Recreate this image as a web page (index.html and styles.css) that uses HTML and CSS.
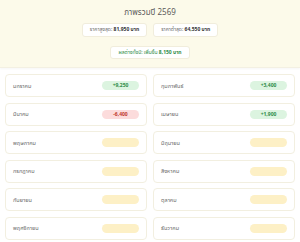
FILE: index.html
```html
<!DOCTYPE html>
<html lang="th">
<head>
<meta charset="utf-8">
<link rel="stylesheet" href="styles.css">
</head>
<body>
<header class="summary">
  <h1 class="title">ภาพรวมปี 2569</h1>
  <div class="stats">
    <div class="stat">ราคาสูงสุด: <b>81,950 บาท</b></div>
    <div class="stat">ราคาต่ำสุด: <b>64,550 บาท</b></div>
  </div>
  <div class="diff">ผลต่างทั้งปี: เพิ่มขึ้น <b>8,150 บาท</b></div>
</header>
<main class="months">
  <div class="card"><span class="name">มกราคม</span><span class="badge up">+9,250</span></div>
  <div class="card"><span class="name">กุมภาพันธ์</span><span class="badge up">+3,400</span></div>
  <div class="card"><span class="name">มีนาคม</span><span class="badge down">-6,400</span></div>
  <div class="card"><span class="name">เมษายน</span><span class="badge up">+1,900</span></div>
  <div class="card"><span class="name">พฤษภาคม</span><span class="badge empty"></span></div>
  <div class="card"><span class="name">มิถุนายน</span><span class="badge empty"></span></div>
  <div class="card"><span class="name">กรกฎาคม</span><span class="badge empty"></span></div>
  <div class="card"><span class="name">สิงหาคม</span><span class="badge empty"></span></div>
  <div class="card"><span class="name">กันยายน</span><span class="badge empty"></span></div>
  <div class="card"><span class="name">ตุลาคม</span><span class="badge empty"></span></div>
  <div class="card"><span class="name">พฤศจิกายน</span><span class="badge empty"></span></div>
  <div class="card"><span class="name">ธันวาคม</span><span class="badge empty"></span></div>
</main>
</body>
</html>
```
FILE: styles.css
```css
html, body {
  margin: 0;
  padding: 0;
  background: #ffffff;
  font-family: "Noto Sans Thai", "Sarabun", "Noto Sans", "DejaVu Sans", sans-serif;
}
.summary {
  background: #fcfaea;
  padding: 7px 0 6px;
  text-align: center;
  border-bottom: 1px solid #f3f0e2;
  box-shadow: 0 1px 2px rgba(0,0,0,0.04);
}
.title {
  margin: 0;
  font-size: 8px;
  line-height: 12px;
  font-weight: 400;
  color: #5c5c5c;
}
.stats {
  display: flex;
  justify-content: center;
  gap: 6px;
  margin-top: 4px;
}
.stat {
  background: #ffffff;
  border: 1px solid #f1eddc;
  border-radius: 3px;
  padding: 0 7px;
  font-size: 5px;
  line-height: 12px;
  color: #6a6a6a;
}
.stat b {
  color: #333333;
  font-weight: 700;
}
.diff {
  display: inline-block;
  margin-top: 6px;
  background: #ffffff;
  border: 1px solid #f1eddc;
  border-radius: 3px;
  padding: 0 7px;
  font-size: 5px;
  line-height: 11px;
  color: #2e8b48;
}
.diff b {
  font-weight: 700;
}
.months {
  display: grid;
  grid-template-columns: 1fr 1fr;
  column-gap: 6px;
  row-gap: 5.6px;
  padding: 6px 5px 0;
}
.card {
  height: 23px;
  box-sizing: border-box;
  border: 1px solid #f2efe0;
  border-radius: 4px;
  padding: 0 7px;
  display: flex;
  align-items: center;
  justify-content: space-between;
  background: #ffffff;
}
.name {
  font-size: 5.5px;
  color: #6a6a6a;
}
.badge {
  width: 37px;
  height: 9px;
  border-radius: 5px;
  font-size: 5px;
  line-height: 9px;
  font-weight: 700;
  text-align: center;
}
.up {
  background: #dcf4e0;
  color: #2e8b48;
}
.down {
  background: #fcdcdc;
  color: #c0392b;
}
.empty {
  background: #fdf0c6;
}
```
